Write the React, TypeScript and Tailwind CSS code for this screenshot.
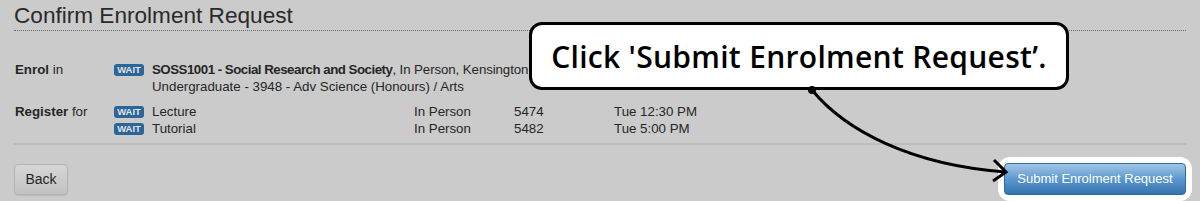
export default function App() {
  return (
    <div className="relative h-[201px] w-[1200px] overflow-hidden bg-[#cbcbcb] font-['Liberation_Sans',Arial,sans-serif] text-[13.3px] text-[#262626]">
      <div className="px-[14px]">
        {/* HEADER */}
        <h1 className="border-b border-dotted border-[#6a6a6a] pt-[3px] pb-[2px] text-[22.6px] leading-[25px] text-[#2a2a2a]">
          Confirm Enrolment Request
        </h1>

        {/* ROWS */}
        <div className="mt-[30px] flex flex-col gap-[8px] border-b-2 border-[#bdbdbd] pb-[6px]">
          <div className="flex leading-[17px]">
            <div className="w-[100px] pl-px">
              <b>Enrol</b> in
            </div>
            <div className="flex">
              <Badge />
              <div>
                <div className="tracking-[-0.1px]">
                  <b className="tracking-[-0.5px]">SOSS1001 - Social Research and Society</b>, In Person, Kensington
                </div>
                <div>Undergraduate - 3948 - Adv Science (Honours) / Arts</div>
              </div>
            </div>
          </div>
          <div className="flex leading-[17px]">
            <div className="w-[100px] pl-px">
              <b>Register</b> for
            </div>
            <div className="flex flex-col">
              <ClassRow name="Lecture" num="5474" time="Tue 12:30 PM" />
              <ClassRow name="Tutorial" num="5482" time="Tue 5:00 PM" />
            </div>
          </div>
        </div>

        {/* ACTIONS */}
        <div className="mt-[12px] flex items-center justify-between">
          <button className="h-[31px] w-[54px] rounded-[4px] border border-[#b3b3b3] bg-gradient-to-b from-[#d6d6d6] to-[#c2c2c2] text-[14px] text-[#262626] shadow-[0_1px_1px_rgba(0,0,0,0.08)]">
            Back
          </button>
          <div className="-mr-[6px] rounded-[12px] bg-white p-[6px]">
            <button className="h-[32px] w-[182px] rounded-[4px] border border-[#2d6aa0] bg-gradient-to-b from-[#a2c6e7] via-[#5c98cf] to-[#3573b0] text-[13px] text-white">
              Submit Enrolment Request
            </button>
          </div>
        </div>
      </div>

      {/* CALLOUT */}
      <div className="absolute left-[529px] top-[22px] flex h-[68px] w-[540px] items-center justify-center rounded-[13px] border-[3px] border-black bg-white font-['Open_Sans',sans-serif] text-[30px] font-semibold tracking-[0.3px] text-black">
        Click 'Submit Enrolment Request’.
      </div>
      <svg className="pointer-events-none absolute left-0 top-0" width="1200" height="201" viewBox="0 0 1200 201">
        <path d="M812 90 C 845 130, 910 165, 1006 172" fill="none" stroke="#000" strokeWidth="3" />
        <path d="M994 160 L1006 172 L993 181" fill="none" stroke="#000" strokeWidth="3" strokeLinejoin="miter" />
        <circle cx="812" cy="90" r="4" fill="#000" />
      </svg>
    </div>
  );
}

function Badge() {
  return (
    <span className="mt-[3px] mr-[8px] flex h-[12px] w-[30px] shrink-0 items-center justify-center rounded-[3px] bg-[#2b6599] text-[9.5px] font-bold leading-none text-[#e4e4e4]">
      WAIT
    </span>
  );
}

function ClassRow({ name, num, time }: { name: string; num: string; time: string }) {
  return (
    <div className="flex">
      <Badge />
      <div className="w-[262px]">{name}</div>
      <div className="w-[100px]">In Person</div>
      <div className="w-[100px]">{num}</div>
      <div>{time}</div>
    </div>
  );
}
